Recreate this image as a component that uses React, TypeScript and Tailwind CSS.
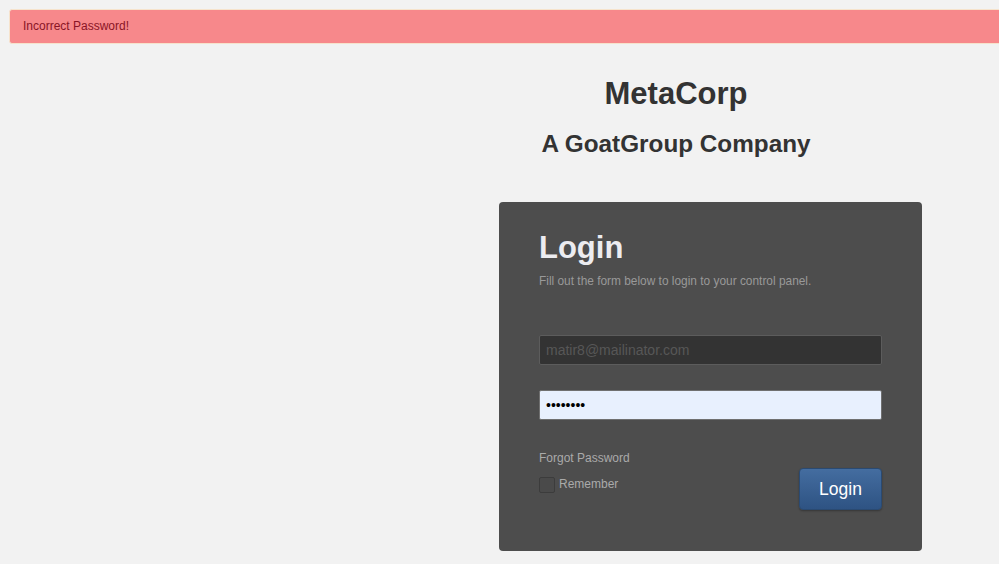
import { useState } from 'react';

export default function App() {
  const [remember, setRemember] = useState(false);

  return (
    <div className="w-full min-h-screen overflow-hidden bg-[#f2f2f2] font-['Liberation_Sans',Arial,sans-serif]">
      <div className="w-[1352px] pt-[9px]">
        {/* Alert */}
        <div className="mx-[9px] h-[35px] flex items-center pl-[13px] pb-[1px] bg-[#f7888b] border border-[#f6e3cc] rounded-[3px] text-[12px] leading-[18px] text-[#8a1526]">
          Incorrect Password!
        </div>

        {/* Brand */}
        <div className="text-center text-[#333333]">
          <h1 className="mt-[33px] text-[31px] leading-[34px] font-bold">MetaCorp</h1>
          <h2 className="mt-[19px] text-[24.3px] leading-[28px] font-bold">A GoatGroup Company</h2>
        </div>

        {/* Login panel */}
        <div className="grid grid-cols-[499px_423px] mt-[44px]">
          <div />
          <div className="bg-[#4d4d4d] rounded-[4px] pt-[29px] pb-[41px] px-[40px]">
            <h3 className="text-[31px] leading-[34px] font-bold text-[#ececf0]">Login</h3>
            <p className="mt-[7px] text-[11.9px] leading-[18px] text-[#999999]">
              Fill out the form below to login to your control panel.
            </p>

            <input
              type="text"
              placeholder="matir8@mailinator.com"
              className="mt-[45px] block w-full h-[30px] px-[6px] bg-[#333333] border border-[#5c5c5c] rounded-[2px] text-[14px] text-[#ccc] placeholder:text-[#575757] outline-none"
            />
            <input
              type="password"
              defaultValue="password"
              className="mt-[25px] block w-full h-[30px] px-[6px] bg-[#e8f0fe] border border-[#707070] rounded-[2px] text-[14px] text-black outline-none"
            />

            <div className="mt-[29px] flex justify-between items-start">
              <div>
                <a href="#" className="block text-[12px] leading-[18px] text-[#aaaaaa]">
                  Forgot Password
                </a>
                <label className="mt-[10px] flex items-center gap-[4px] text-[12px] leading-[18px] text-[#aaaaaa] cursor-pointer">
                  <span
                    onClick={() => setRemember(!remember)}
                    className="w-[16px] h-[16px] border border-[#3c3c3c] rounded-[2px] bg-[#4a4a4a] flex items-center justify-center text-[11px] text-[#ddd]"
                  >
                    {remember ? '✓' : ''}
                  </span>
                  <span className="-mt-[2px]">Remember</span>
                </label>
              </div>
              <button className="mt-[19px] w-[83px] h-[42px] rounded-[4px] border border-[#2a4a72] bg-gradient-to-b from-[#446da0] to-[#2e5383] text-white text-[17.5px] shadow-[0_1px_2px_rgba(0,0,0,0.3)]">
                Login
              </button>
            </div>
          </div>
        </div>
      </div>
    </div>
  );
}
